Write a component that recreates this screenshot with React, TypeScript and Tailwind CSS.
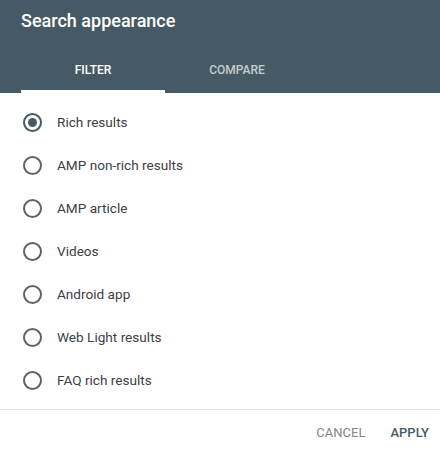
import React, { useState } from "react";

const options = [
  "Rich results",
  "AMP non-rich results",
  "AMP article",
  "Videos",
  "Android app",
  "Web Light results",
  "FAQ rich results",
];

export default function App() {
  const [sel, setSel] = useState(0);
  return (
    <div className="w-[440px] h-[453px] bg-white flex flex-col" style={{ fontFamily: "Roboto, 'Liberation Sans', sans-serif" }}>
      <div className="bg-[#455a64] h-[93px] flex flex-col shrink-0">
        <div className="h-[41px] flex items-center pl-[21px] text-white text-[18px] font-medium">Search appearance</div>
        <div className="flex pl-[21px] mt-[7px] h-[45px]">
          <div className="w-[144px] flex flex-col">
            <div className="flex-1 flex items-center justify-center text-white text-[12px] font-medium pt-[1px]">FILTER</div>
            <div className="h-[3px] bg-white"></div>
          </div>
          <div className="w-[144px] flex flex-col">
            <div className="flex-1 flex items-center justify-center text-white/70 text-[12px] font-medium pt-[1px]">COMPARE</div>
            <div className="h-[3px]"></div>
          </div>
        </div>
      </div>
      <div className="pt-[8px] pb-[7px] border-b border-[#e0e0e0]">
        {options.map((o, i) => (
          <div key={o} className="h-[43px] flex items-center cursor-pointer" onClick={() => setSel(i)}>
            <div className="ml-[23px] w-[19px] h-[19px] rounded-full border-2 flex items-center justify-center"
              style={{ borderColor: sel === i ? "#455a64" : "#5f6368" }}>
              {sel === i && <div className="w-[9px] h-[9px] rounded-full bg-[#455a64]"></div>}
            </div>
            <div className="ml-[15px] text-[13.6px] text-[#3c4043]">{o}</div>
          </div>
        ))}
      </div>
      <div className="flex-1 flex items-center justify-end pr-[3px] pt-[3px]">
        <div className="text-[13px] text-[#80868b] px-[8px] py-[4px]">CANCEL</div>
        <div className="text-[13px] font-medium text-[#455a64] ml-[9px] px-[8px] py-[4px]">APPLY</div>
      </div>
    </div>
  );
}
